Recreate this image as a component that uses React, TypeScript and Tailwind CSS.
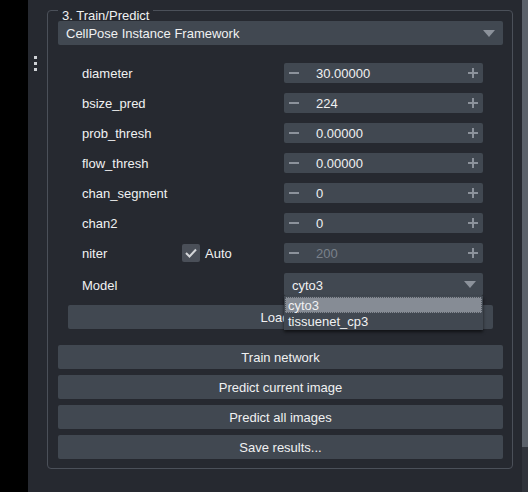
import React from 'react'

const spinRows = [
	{ label: 'diameter', value: '30.00000' },
	{ label: 'bsize_pred', value: '224' },
	{ label: 'prob_thresh', value: '0.00000' },
	{ label: 'flow_thresh', value: '0.00000' },
	{ label: 'chan_segment', value: '0' },
	{ label: 'chan2', value: '0' },
]

const actions = ['Train network', 'Predict current image', 'Predict all images', 'Save results...']

const Minus = () => (
	<svg width="10" height="10" viewBox="0 0 10 10">
		<path d="M0 5h10" stroke="#8c929b" strokeWidth="2" />
	</svg>
)

const Plus = () => (
	<svg width="10" height="10" viewBox="0 0 10 10">
		<path d="M0 5h10M5 0v10" stroke="#8c929b" strokeWidth="2" />
	</svg>
)

const Arrow = () => (
	<svg width="12" height="7" viewBox="0 0 12 7">
		<path d="M0 0h12L6 7z" fill="#8c929b" />
	</svg>
)

function SpinBox({ value, disabled }: { value: string; disabled?: boolean }) {
	return (
		<div className="w-[199px] h-[20px] bg-[#414851] rounded-[2px] flex items-center pl-[5px] pr-[5px]">
			<Minus />
			<span className={`ml-[17px] mt-[2px] flex-1 ${disabled ? 'text-[#7a818b]' : 'text-[#f0f1f2]'}`}>{value}</span>
			<Plus />
		</div>
	)
}

export default function App() {
	return (
		<div className="w-[528px] h-[492px] flex bg-[#262930] overflow-hidden text-[13px] text-[#f0f1f2] font-['Liberation_Sans',sans-serif] leading-[16px]">
			<div className="w-[28px] shrink-0 bg-black" />

			{/* splitter handle */}
			<div className="w-[19px] shrink-0 flex flex-col pl-[6px] pt-[56px] gap-[3px]">
				<div className="w-[3px] h-[3px] bg-[#cfd2d6]" />
				<div className="w-[3px] h-[3px] bg-[#cfd2d6]" />
				<div className="w-[3px] h-[3px] bg-[#cfd2d6]" />
			</div>

			<div className="w-[466px] h-[459px] mt-[10px] shrink-0 relative border border-[#4b5059] rounded-[4px] pt-[10px]">
				<div className="absolute left-[10px] top-[-3px] px-[4px] bg-[#262930]">3. Train/Predict</div>

				<div className="ml-[10px] w-[445px] h-[24px] bg-[#414851] rounded-[2px] flex items-center pl-[8px] pr-[8px] relative">
					<span className="flex-1 mt-[2px]">CellPose Instance Framework</span>
					<Arrow />
				</div>

				<div className="mt-[13px] flex flex-col">
					{spinRows.map((r) => (
						<div key={r.label} className="h-[30px] flex items-center pl-[34px]">
							<span className="w-[202px] mt-[2px]">{r.label}</span>
							<SpinBox value={r.value} />
						</div>
					))}
					<div className="h-[30px] flex items-center pl-[34px]">
						<span className="w-[100px] mt-[2px]">niter</span>
						<div className="w-[18px] h-[18px] bg-[#4a4f58] rounded-[2px] flex items-center justify-center">
							<svg width="12" height="10" viewBox="0 0 12 10">
								<path d="M1 5l3.5 3.5L11 1.5" stroke="#d4d6d9" strokeWidth="2" fill="none" />
							</svg>
						</div>
						<span className="ml-[5px] w-[79px] mt-[2px]">Auto</span>
						<SpinBox value="200" disabled />
					</div>
					<div className="mt-[5px] flex items-center pl-[34px]">
						<span className="w-[202px] mt-[2px]">Model</span>
						<div className="relative w-[199px] h-[23px] bg-[#414851] rounded-[2px] flex items-center pl-[8px] pr-[7px]">
							<span className="flex-1 mt-[2px]">cyto3</span>
							<Arrow />
							<div className="absolute left-0 top-full w-[199px] bg-[#414851] p-[1px] z-10 shadow-[0_2px_3px_rgba(0,0,0,0.6)]">
								<div className="h-[16px] bg-[#868c95] border border-dotted border-[#4e545c] flex items-center pl-[2px] pt-[1px]">cyto3</div>
								<div className="h-[16px] flex items-center pl-[3px] pt-[1px]">tissuenet_cp3</div>
							</div>
						</div>
					</div>
				</div>

				<button className="mt-[9px] ml-[20px] w-[425px] h-[24px] bg-[#414851] rounded-[2px] flex items-center justify-center pt-[2px]">
					Load...
				</button>

				<div className="mt-[16px] ml-[10px] w-[445px] flex flex-col gap-[6px]">
					{actions.map((a) => (
						<button key={a} className="h-[24px] bg-[#414851] rounded-[2px] flex items-center justify-center pt-[2px]">
							{a}
						</button>
					))}
				</div>
			</div>

			<div className="w-[9px] shrink-0" />
			<div className="w-[6px] shrink-0 flex flex-col">
				<div className="h-[447px] bg-[#5b616a]" />
				<div className="flex-1 bg-[#30343b]" />
			</div>
		</div>
	)
}
